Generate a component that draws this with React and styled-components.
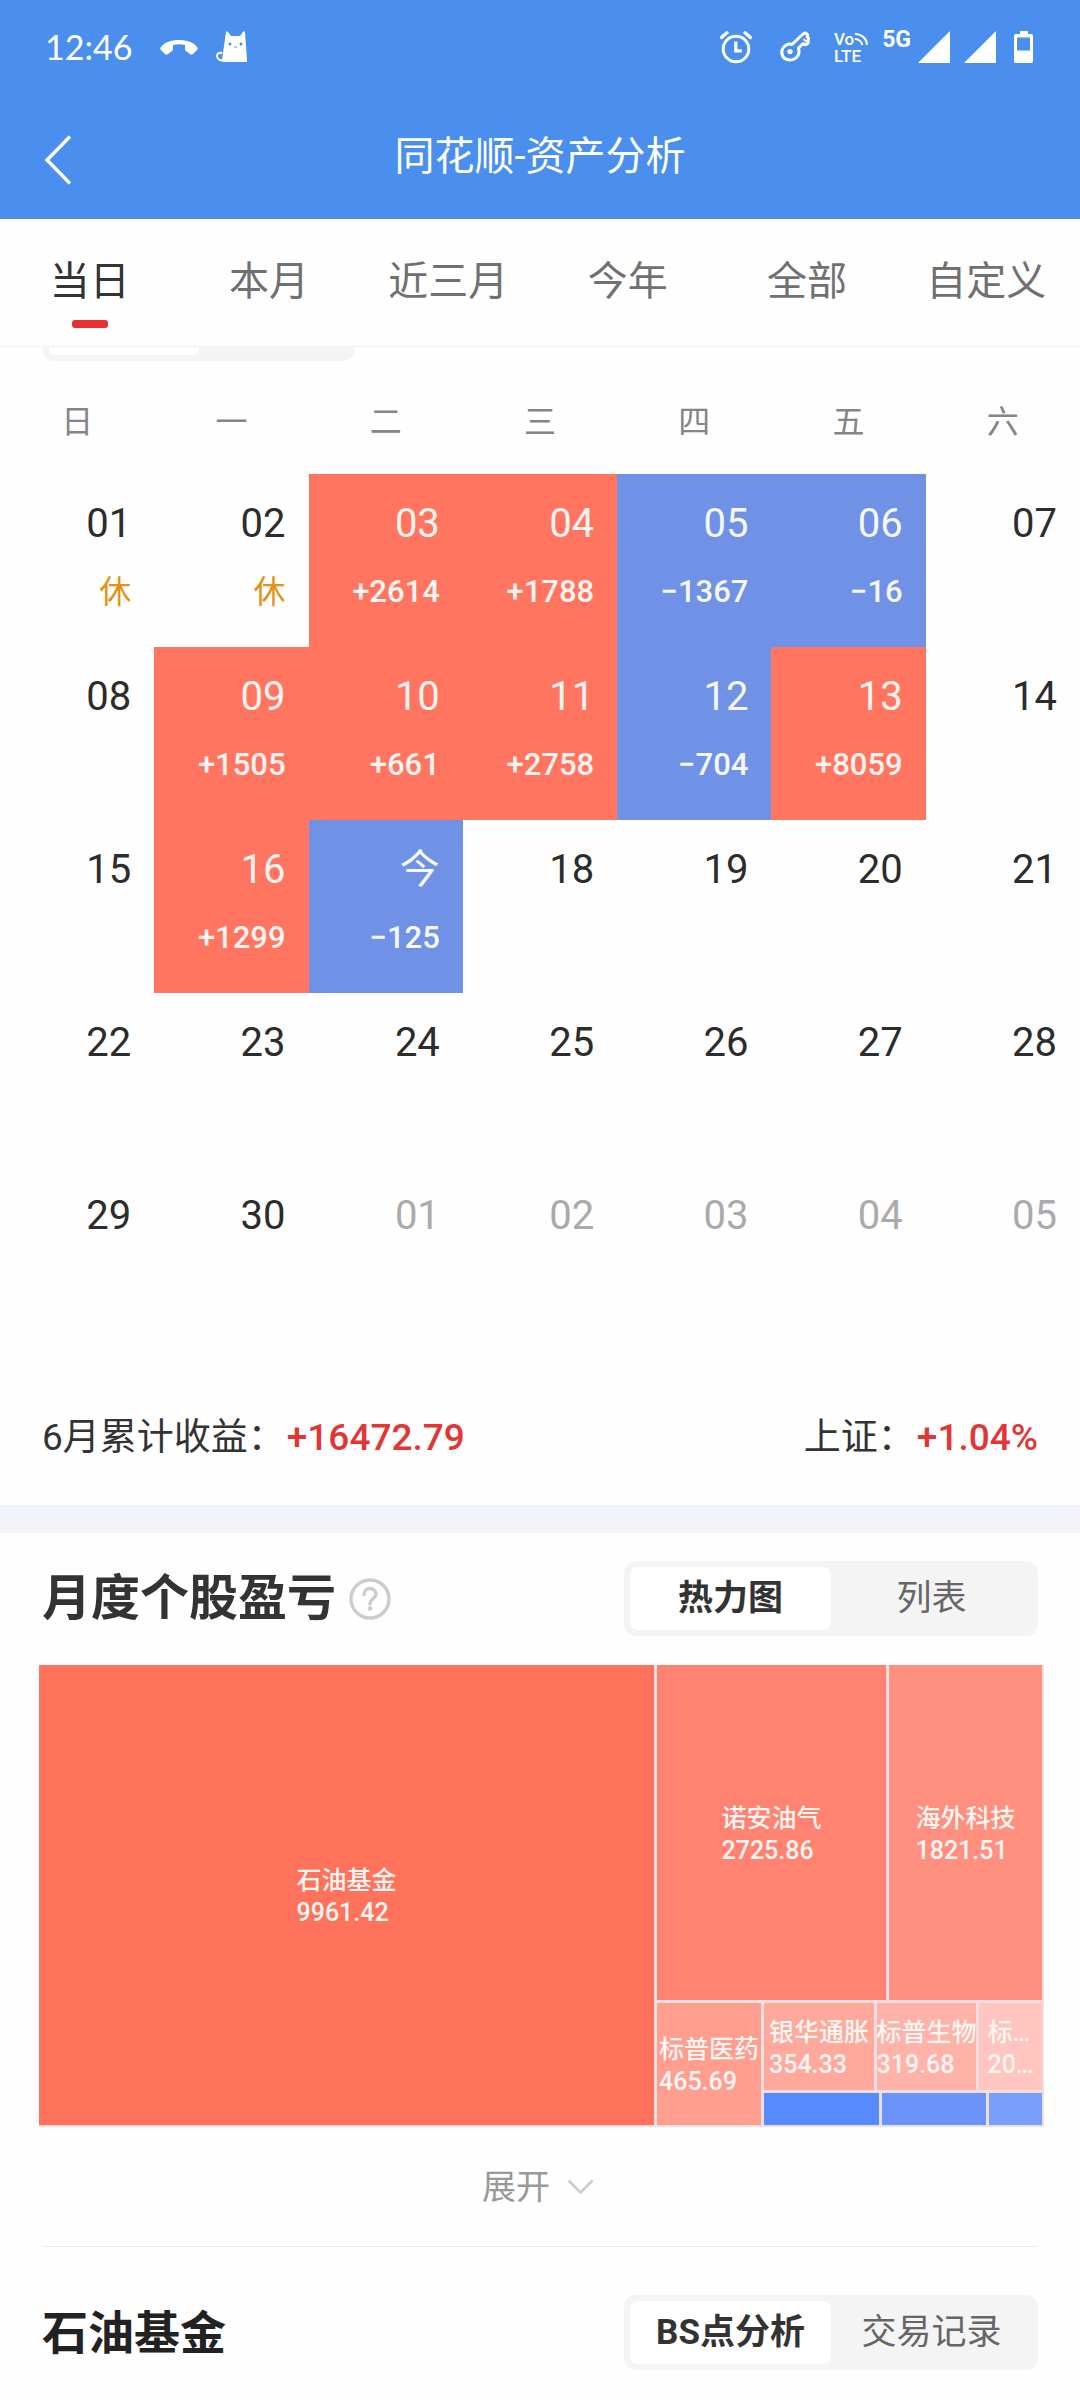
import React, { useState } from 'react'
import styled, { createGlobalStyle } from 'styled-components'

const GlobalStyle = createGlobalStyle`
  * { box-sizing: border-box; }
  body {
    margin: 0;
    background: #fefefe;
    color: #333;
    font-family: Roboto, "Noto Sans CJK SC", sans-serif;
  }
  button {
    margin: 0;
    padding: 0;
    border: 0;
    background: none;
    color: inherit;
    font: inherit;
    cursor: pointer;
  }
  h1, h2, p { margin: 0; }
  svg { display: block; flex: none; overflow: visible; }
`;

const Page = styled.div`
  min-height: 100vh;
  overflow: hidden;
`;

/* ---------- header ---------- */

const Header = styled.header`
  background: #4a8fee;
  color: #fff;
`;

const StatusBar = styled.div`
  display: flex;
  justify-content: space-between;
  align-items: center;
  height: 94px;
  padding: 0 47px 0 45px;
`;

const StatusGroup = styled.div`
  display: flex;
  align-items: center;
  gap: ${props => props.$gap}px;
`;

const Clock = styled.span`
  width: 90px;
  font-family: Lato, sans-serif;
  font-size: 34px;
  line-height: 40px;
`;

const Network = styled.span`
  align-self: flex-start;
  font-size: 23px;
  font-weight: 700;
  line-height: 18px;
`;

const NavBar = styled.div`
  display: grid;
  grid-template-columns: 120px 1fr 120px;
  align-items: center;
  height: 125px;
`;

const BackButton = styled.button`
  display: flex;
  align-items: center;
  height: 100%;
  padding: 7px 0 0 44px;
`;

const Title = styled.h1`
  font-size: 40px;
  font-weight: 400;
  line-height: 60px;
  text-align: center;
`;

/* ---------- range tabs ---------- */

const Tabs = styled.nav`
  display: grid;
  grid-template-columns: repeat(6, 1fr);
  height: 128px;
  padding-right: 4px;
  border-bottom: 1px solid #f0f0f0;
`;

const Tab = styled.button`
  display: flex;
  flex-direction: column;
  align-items: center;
  padding-top: 33px;
  font-size: 40px;
  line-height: 60px;
  white-space: nowrap;
  color: ${props => (props.$active ? '#333' : '#707070')};

  &::after {
    content: "";
    width: 36px;
    height: 8px;
    margin-top: 8px;
    border-radius: 3px;
    background: ${props => (props.$active ? '#e93030' : 'transparent')};
  }
`;

/* lower edge of the switch that is scrolled under the tabs */
const ScrolledSwitch = styled.div`
  width: 311px;
  height: 14px;
  margin-left: 43px;
  padding: 0 6px 6px;
  border-radius: 0 0 10px 10px;
  background: #f4f4f4;

  &::before {
    content: "";
    display: block;
    width: 50%;
    height: 8px;
    border-radius: 0 0 5px 5px;
    background: #fff;
  }
`;

/* ---------- calendar ---------- */

const Calendar = styled.table`
  width: 100%;
  border-collapse: collapse;
  table-layout: fixed;
`;

const Weekday = styled.th`
  padding: 41px 0 32px;
  font-size: 32px;
  font-weight: 400;
  line-height: 40px;
  color: #858585;
`;

const dayColors = {
  up: { bg: '#ff7560', fg: '#fff4f2' },
  down: { bg: '#6f91e6', fg: '#f6f8fe' },
  muted: { bg: 'transparent', fg: '#aaa' },
  plain: { bg: 'transparent', fg: '#2c2c2c' },
};

const Day = styled.td`
  height: 173px;
  padding: 22px 23px 0 0;
  vertical-align: top;
  text-align: right;
  white-space: nowrap;
  background: ${props => dayColors[props.$kind].bg};
  color: ${props => dayColors[props.$kind].fg};
`;

const DayNumber = styled.div`
  font-size: 40px;
  line-height: 55px;
`;

const DayNote = styled.div`
  margin-top: 23px;
  font-size: ${props => (props.$rest ? 32 : 31)}px;
  font-weight: ${props => (props.$rest ? 400 : 500)};
  line-height: 36px;
  color: ${props => (props.$rest ? '#e29214' : 'inherit')};
`;

const Summary = styled.div`
  display: flex;
  justify-content: space-between;
  padding: 74px 42px 42px;
  border-bottom: 28px solid #f2f3f8;
  font-size: 37px;
  line-height: 50px;
`;

const Gain = styled.span`
  margin-left: 2px;
  font-weight: 500;
  color: #e23636;
`;

/* ---------- sections ---------- */

const SectionHead = styled.div`
  display: flex;
  justify-content: space-between;
  align-items: center;
  padding: ${props => props.$top}px 42px 29px;
`;

const SectionTitle = styled.h2`
  display: flex;
  align-items: center;
  gap: 13px;
  font-size: ${props => props.$size}px;
  font-weight: 700;
  line-height: 70px;
  color: ${props => props.$color};
`;

const Switch = styled.div`
  display: flex;
  width: 414px;
  height: 75px;
  padding: 6px;
  border-radius: 12px;
  background: #f4f4f4;
`;

const SwitchButton = styled.button`
  flex: 1;
  border-radius: 8px;
  font-size: 35px;
  line-height: 50px;
  font-weight: ${props => (props.$active ? 700 : 400)};
  color: ${props => (props.$active ? '#333' : '#666')};
  background: ${props => (props.$active ? '#fff' : 'transparent')};
`;

/* ---------- heat map ---------- */

const HeatMap = styled.div`
  display: flex;
  gap: 3px;
  height: 462px;
  margin: 0 36px 0 39px;
  padding: 0 2px 2px 0;
  background: #ecdfe1;
`;

const Split = styled.div`
  display: flex;
  flex: ${props => props.$grow} 1 0;
  flex-direction: ${props => props.$dir};
  gap: 3px;
  min-width: 0;
  min-height: 0;
`;

const Tile = styled.div`
  display: flex;
  flex: ${props => props.$grow} 1 0;
  align-items: center;
  justify-content: center;
  min-width: 0;
  min-height: 0;
  padding-top: 4px;
  background: ${props => props.$bg};
  color: #fff6f4;
  font-size: 25px;
  font-weight: 500;
  line-height: 32px;
  white-space: nowrap;
`;

const ExpandButton = styled.button`
  display: flex;
  align-items: center;
  justify-content: center;
  gap: 17px;
  width: 100%;
  height: 119px;
  padding-right: 4px;
  font-size: 34px;
  line-height: 50px;
  color: #999;
`;

const Divider = styled.hr`
  height: 1px;
  margin: 0 42px;
  border: 0;
  background: #ececec;
`;

/* ---------- icons ---------- */

const PhoneIcon = () => (
  <svg width="38" height="16" viewBox="0 0 38 16" fill="#fff">
    <path d="M1 8C5 3 11 1 19 1s14 2 18 7c1 1 1 2 0 3l-4 4c-1 1-2 1-3 0l-4-3c-1-1-1-1-1-2V6c-4-1-8-1-12 0v4c0 1 0 1-1 2l-4 3c-1 1-2 1-3 0l-4-4c-1-1-1-2 0-3z" />
  </svg>
)

const CatIcon = () => (
  <svg width="32" height="32" viewBox="0 0 32 32">
    <path d="M10 1c1-1 1-1 2 0l3 4h9l3-4c1-1 2-1 2 0l2 28c0 2 0 2-2 2H9c-2 0-3-1-3-2z" fill="#fff" />
    <path d="M8 29.500C3 30 1 27 1 25s2-4 4.500-3" fill="none" stroke="#fff" strokeWidth="2" strokeLinecap="round" />
    <circle cx="14" cy="13" r="1.500" fill="#4a8fee" />
    <circle cx="25" cy="13" r="1.500" fill="#4a8fee" />
    <path d="M18 15.500l1.500 1 1.500-1" fill="none" stroke="#4a8fee" strokeWidth="1" />
  </svg>
)

const AlarmIcon = () => (
  <svg width="46" height="32" viewBox="0 0 46 32" fill="none" stroke="#fff">
    <circle cx="23" cy="18" r="12.800" strokeWidth="3" />
    <path d="M8.500 6.500L14 1.800M37.500 6.500L32 1.800" strokeWidth="3.400" strokeLinecap="round" />
    <path d="M22.800 10.500v9.300h6" strokeWidth="3.200" />
  </svg>
)

const KeyIcon = () => (
  <svg width="47" height="32" viewBox="0 0 47 32" fill="none" stroke="#fff" strokeWidth="3" strokeLinejoin="round">
    <path d="M19 13.500L29 4c2-2 4-2 5-1s1 2 0 3c2 1 2 2 1 3.500c1 1 0 3-1 3.500c-1.500 1-3 .500-4-.500L25.500 17c2 6-2 12-8.500 12s-9-5-8-10c1-4 6-7 10-5.500z" />
    <circle cx="17" cy="20.500" r="2.600" fill="#fff" stroke="none" />
    <path d="M30.500 8l3.500 3" strokeWidth="2" />
  </svg>
)

const VolteIcon = () => (
  <svg width="34" height="32" viewBox="0 0 34 32" fill="#fff" fontFamily="Roboto" fontWeight="500">
    <text x="0" y="14" fontSize="17">Vo</text>
    <text x="0" y="31" fontSize="17">LTE</text>
    <path d="M21 3c7 0 12 5 12 11M21 8c4 0 7 3 7 6" fill="none" stroke="#fff" strokeWidth="2" />
  </svg>
)

const SignalIcon = () => (
  <svg width="32" height="32" viewBox="0 0 32 32" fill="#fff">
    <path d="M32 0v32H0z" />
  </svg>
)

const BatteryIcon = () => (
  <svg width="23" height="32" viewBox="0 0 23 32">
    <path d="M10 0h8v3h3c1.500 0 2 .500 2 2v25c0 1.500-.500 2-2 2H6c-1.500 0-2-.500-2-2V5c0-1.500.500-2 2-2h4zM7 6.500v13h13v-13z" fill="#fff" fillRule="evenodd" />
  </svg>
)

const BackIcon = () => (
  <svg width="28" height="50" viewBox="0 0 28 50" fill="none" stroke="#fff" strokeWidth="3.400">
    <path d="M26 1.500L3 25l23 23.500" />
  </svg>
)

const HelpIcon = () => (
  <svg width="42" height="42" viewBox="0 0 42 42" fill="none" stroke="#ccc" strokeWidth="3.400">
    <circle cx="21" cy="21" r="19" />
    <path d="M15 16.500c0-4 3-6 6-6s6 2 6 5.500c0 4.500-6 4.500-6 10" strokeLinecap="round" />
    <circle cx="21" cy="30.500" r="2.300" fill="#ccc" stroke="none" />
  </svg>
)

const ChevronIcon = () => (
  <svg width="27" height="16" viewBox="0 0 27 16" fill="none" stroke="#ccc" strokeWidth="2.600">
    <path d="M1.500 1.500l12 12 12-12" />
  </svg>
)

/* ---------- data ---------- */

const ranges = ['当日', '本月', '近三月', '今年', '全部', '自定义']
const weekdays = ['日', '一', '二', '三', '四', '五', '六']

const weeks = [
  [['01', '休'], ['02', '休'], ['03', '+2614'], ['04', '+1788'], ['05', '−1367'], ['06', '−16'], ['07']],
  [['08'], ['09', '+1505'], ['10', '+661'], ['11', '+2758'], ['12', '−704'], ['13', '+8059'], ['14']],
  [['15'], ['16', '+1299'], ['今', '−125'], ['18'], ['19'], ['20'], ['21']],
  [['22'], ['23'], ['24'], ['25'], ['26'], ['27'], ['28']],
  [['29'], ['30'], ['01', '', true], ['02', '', true], ['03', '', true], ['04', '', true], ['05', '', true]],
]

const kindOf = (note, muted) => {
  if (muted) return 'muted'
  if (note && note[0] === '+') return 'up'
  if (note && note[0] === '−') return 'down'
  return 'plain'
}

const Stock = ({ grow, bg, name, value }) => (
  <Tile $grow={grow} $bg={bg}>
    {name && <div>{name}<br />{value}</div>}
  </Tile>
)

const SwitchBar = ({ options }) => {
  const [current, setCurrent] = useState(0)
  return (
    <Switch>
      {options.map((text, i) => (
        <SwitchButton key={text} type="button" $active={i === current} aria-pressed={i === current} onClick={() => setCurrent(i)}>{text}</SwitchButton>
      ))}
    </Switch>
  )
}

export default function App() {
  const [range, setRange] = useState('当日')

  return (
    <Page>
      <GlobalStyle />
      <Header>
        <StatusBar>
          <StatusGroup $gap={18}>
            <StatusGroup $gap={25}>
              <Clock>12:46</Clock>
              <PhoneIcon />
            </StatusGroup>
            <CatIcon />
          </StatusGroup>
          <StatusGroup $gap={14}>
            <AlarmIcon />
            <KeyIcon />
            <VolteIcon />
            <StatusGroup $gap={7}>
              <Network>5G</Network>
              <SignalIcon />
            </StatusGroup>
            <SignalIcon />
            <BatteryIcon />
          </StatusGroup>
        </StatusBar>
        <NavBar>
          <BackButton type="button" aria-label="返回"><BackIcon /></BackButton>
          <Title>同花顺-资产分析</Title>
        </NavBar>
      </Header>

      <Tabs>
        {ranges.map(text => (
          <Tab key={text} type="button" $active={text === range} onClick={() => setRange(text)}>{text}</Tab>
        ))}
      </Tabs>

      <ScrolledSwitch />
      <Calendar>
        <thead>
          <tr>{weekdays.map(text => <Weekday key={text} scope="col">{text}</Weekday>)}</tr>
        </thead>
        <tbody>
          {weeks.map((week, i) => (
            <tr key={i}>
              {week.map(([day, note, muted]) => (
                <Day key={day} $kind={kindOf(note, muted)}>
                  <DayNumber>{day}</DayNumber>
                  {note && <DayNote $rest={note === '休'}>{note}</DayNote>}
                </Day>
              ))}
            </tr>
          ))}
        </tbody>
      </Calendar>
      <Summary>
        <p>6月累计收益：<Gain>+16472.79</Gain></p>
        <p>上证：<Gain>+1.04%</Gain></p>
      </Summary>

      <SectionHead $top={28}>
        <SectionTitle $size={49} $color="#333">
          月度个股盈亏
          <button type="button" aria-label="说明"><HelpIcon /></button>
        </SectionTitle>
        <SwitchBar options={['热力图', '列表']} />
      </SectionHead>
      <HeatMap>
        <Stock grow={615} bg="#ff735d" name="石油基金" value="9961.42" />
        <Split $grow={385} $dir="column">
          <Split $grow={335} $dir="row">
            <Stock grow={229} bg="#ff8370" name="诺安油气" value="2725.86" />
            <Stock grow={153} bg="#ff907f" name="海外科技" value="1821.51" />
          </Split>
          <Split $grow={122} $dir="row">
            <Stock grow={104} bg="#ff9e8f" name="标普医药" value="465.69" />
            <Split $grow={278} $dir="column">
              <Split $grow={87} $dir="row">
                <Stock grow={110} bg="#ffa99c" name="银华通胀" value="354.33" />
                <Stock grow={99} bg="#ffb3a8" name="标普生物" value="319.68" />
                <Stock grow={63} bg="#ffc5be" name="标…" value="20…" />
              </Split>
              <Split $grow={32} $dir="row">
                <Stock grow={115} bg="#578aff" />
                <Stock grow={104} bg="#6b93fa" />
                <Stock grow={53} bg="#7a9ffb" />
              </Split>
            </Split>
          </Split>
        </Split>
      </HeatMap>
      <ExpandButton type="button">展开<ChevronIcon /></ExpandButton>
      <Divider />

      <SectionHead $top={48}>
        <SectionTitle $size={46} $color="#222">石油基金</SectionTitle>
        <SwitchBar options={['BS点分析', '交易记录']} />
      </SectionHead>
    </Page>
  )
}
